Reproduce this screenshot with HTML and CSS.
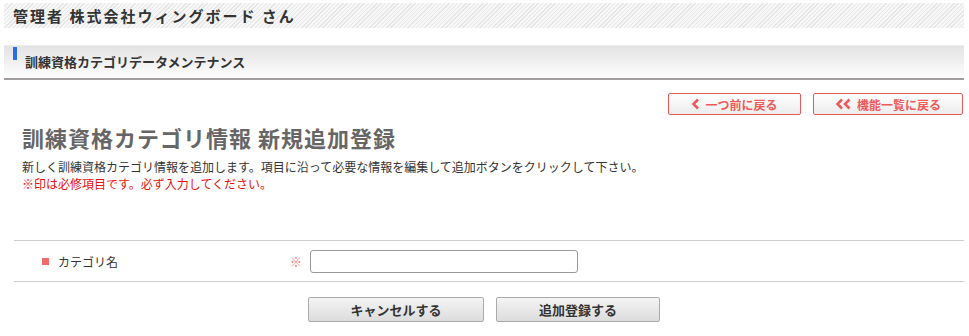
FILE: index.html
```html
<!DOCTYPE html>
<html lang="ja">
<head>
  <meta charset="UTF-8">
  <meta name="viewport" content="width=device-width, initial-scale=1.0">
  <title>訓練資格カテゴリデータメンテナンス</title>
  <link rel="stylesheet" href="styles.css">
</head>
<body>
<div class="page">
  <header class="user-bar">
    <p class="user-bar__name">管理者 株式会社ウィングボード さん</p>
  </header>
  <div class="title-bar">
    <h1 class="title-bar__text">訓練資格カテゴリデータメンテナンス</h1>
  </div>
  <section class="content">
    <nav class="back-links">
      <a href="#" class="back-btn">
        <svg class="back-btn__arrow" width="9" height="12" viewBox="0 0 9 12"><path d="M7 1.5 L2.5 6 L7 10.5" fill="none" stroke="currentColor" stroke-width="2.6"/></svg>
        一つ前に戻る
      </a>
      <a href="#" class="back-btn">
        <svg class="back-btn__arrow" width="17" height="12" viewBox="0 0 17 12"><path d="M7 1.5 L2.5 6 L7 10.5 M14.5 1.5 L10 6 L14.5 10.5" fill="none" stroke="currentColor" stroke-width="2.6"/></svg>
        機能一覧に戻る
      </a>
    </nav>
    <h2 class="content__title">訓練資格カテゴリ情報 新規追加登録</h2>
    <p class="content__lead">新しく訓練資格カテゴリ情報を追加します。項目に沿って必要な情報を編集して追加ボタンをクリックして下さい。</p>
    <p class="content__note">※印は必修項目です。必ず入力してください。</p>

    <form class="entry-form">
      <div class="entry-form__row">
        <label for="category" class="entry-form__label">カテゴリ名</label>
        <span class="entry-form__required">※</span>
        <input type="text" id="category" class="entry-form__input">
      </div>
      <div class="entry-form__actions">
        <button type="button" class="action-btn action-btn--cancel">キャンセルする</button>
        <button type="submit" class="action-btn action-btn--submit">追加登録する</button>
      </div>
    </form>
  </section>
</div>
</body>
</html>
```

FILE: styles.css
```css
body {
  margin: 0;
  background: #fff;
  color: #333;
  font-family: "Noto Sans CJK JP", "Noto Sans", sans-serif;
  font-size: 12px;
}

.page {
  width: 960px;
  margin-left: 4px;
  padding-top: 3px;
}

.user-bar {
  height: 25px;
  background: repeating-linear-gradient(-45deg, #e6e6e6 0 1px, #f7f7f7 1px 3px);
}

.user-bar__name {
  margin: 0;
  padding-left: 9px;
  font-size: 15px;
  font-weight: bold;
  line-height: 25px;
  letter-spacing: 2px;
  color: #333;
}

.title-bar {
  position: relative;
  margin-top: 17px;
  height: 32px;
  border-top: 1px solid #ececec;
  border-bottom: 2px solid #a39e9e;
  background: linear-gradient(#e3e3e3, #fdfdfd);
}

.title-bar::before {
  content: "";
  position: absolute;
  left: 9px;
  top: 1px;
  width: 4px;
  height: 13px;
  background: #2a6fe0;
}

.title-bar__text {
  margin: 0;
  padding-left: 21px;
  font-size: 13px;
  font-weight: bold;
  line-height: 32px;
  color: #333;
}

.content {
  padding: 13px 0 0;
}

.back-links {
  display: flex;
  justify-content: flex-end;
  gap: 12px;
  padding-right: 1px;
}

.back-btn {
  display: flex;
  align-items: center;
  justify-content: center;
  gap: 5px;
  height: 20px;
  border: 1px solid #e45a5a;
  border-radius: 2px;
  background: linear-gradient(#fff, #ececec);
  color: #ee5a5a;
  font-size: 12px;
  font-weight: bold;
  text-decoration: none;
}

.back-btn:first-child {
  width: 131px;
}

.back-btn:last-child {
  width: 148px;
}

.back-btn__arrow {
  display: block;
}

.content__title {
  margin: 8px 0 0 18px;
  font-size: 22px;
  font-weight: bold;
  line-height: 28px;
  letter-spacing: 1px;
  color: #666;
}

.content__lead {
  margin: 7px 0 0 18px;
  line-height: 17px;
}

.content__note {
  margin: 0 0 0 18px;
  line-height: 17px;
  color: #e81010;
}

.entry-form {
  margin: 48px 0 0 10px;
}

.entry-form__row {
  display: flex;
  align-items: center;
  height: 40px;
  border-top: 1px solid #ccc;
  border-bottom: 1px solid #ccc;
}

.entry-form__label {
  display: flex;
  align-items: center;
  width: 248px;
  padding-left: 28px;
  gap: 9px;
}

.entry-form__label::before {
  content: "";
  width: 7px;
  height: 7px;
  background: #f26b6b;
}

.entry-form__required {
  width: 20px;
  color: #f47070;
}

.entry-form__input {
  width: 258px;
  height: 21px;
  margin: 0;
  padding: 0 4px;
  border: 1px solid #999;
  border-radius: 3px;
  box-sizing: content-box;
}

.entry-form__actions {
  display: flex;
  gap: 12px;
  margin-top: 15px;
  padding-left: 294px;
}

.action-btn {
  height: 25px;
  border: 1px solid #aaa;
  border-radius: 2px;
  background: linear-gradient(#f4f4f4, #dcdcdc);
  color: #333;
  font-family: inherit;
  font-size: 13px;
  font-weight: bold;
  cursor: pointer;
}

.action-btn--cancel {
  width: 176px;
}

.action-btn--submit {
  width: 164px;
}
```
